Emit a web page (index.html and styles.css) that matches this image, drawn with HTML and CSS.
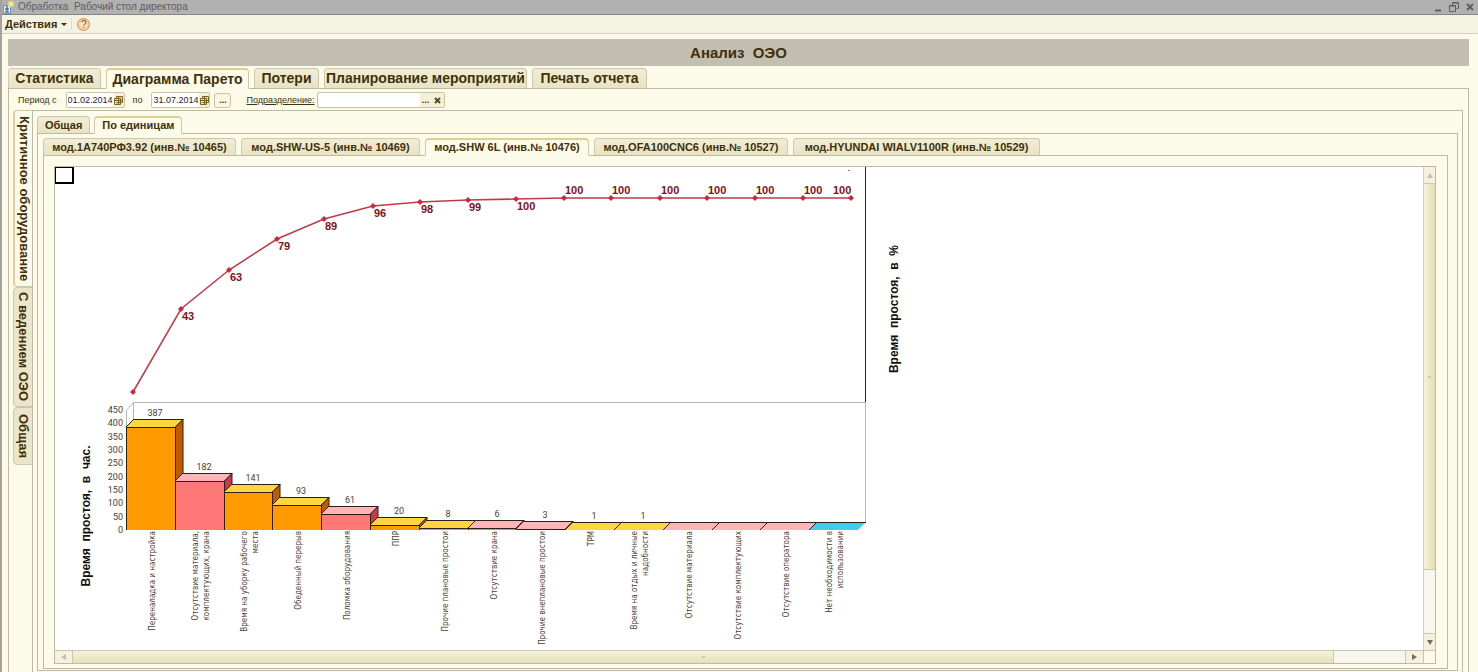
FILE: index.html
```html
<!DOCTYPE html>
<html lang="ru">
<head>
<meta charset="utf-8">
<title>Рабочий стол директора</title>
<link rel="stylesheet" href="styles.css">
</head>
<body>
<div class="app">
  <header class="titlebar">
    <svg class="app-icon" width="12" height="13" viewBox="0 0 12 13" aria-hidden="true">
      <rect x="1" y="4" width="8" height="9" fill="#6f93bd"/>
      <rect x="2" y="5" width="6" height="7" fill="#dfeaf5"/>
      <path d="M5 5v6M3 8h4M3 11h4" stroke="#24496f" stroke-width="1" fill="none"/>
      <circle cx="9" cy="3" r="3" fill="#f1dc7c"/>
      <circle cx="9" cy="3" r="1" fill="#fff4a8"/>
    </svg>
    <span class="titlebar-text">Обработка&nbsp; Рабочий стол директора</span>
    <div class="window-buttons">
      <button class="window-button" aria-label="Свернуть"><svg width="10" height="10" viewBox="0 0 10 10"><path d="M2 8.500h6" stroke="#5e5e60" stroke-width="2"/></svg></button>
      <button class="window-button" aria-label="Восстановить"><svg width="10" height="10" viewBox="0 0 10 10"><path d="M3.500 3V.5h6v6H7.500M.5 3.500h6v6h-6zM0 4h7M3 1h7" stroke="#5e5e60" fill="none"/></svg></button>
      <button class="window-button" aria-label="Закрыть"><svg width="10" height="10" viewBox="0 0 10 10"><path d="M2 2l6 6M8 2L2 8" stroke="#5e5e60" stroke-width="2"/></svg></button>
    </div>
  </header>

  <div class="toolbar">
    <button class="menu-button">Действия <span class="caret"></span></button>
    <button class="help-button" aria-label="Справка">?</button>
  </div>

  <main class="form">
    <h1 class="form-title">Анализ&nbsp; ОЭО</h1>

    <nav class="tabs tabs-large">
      <button class="tab">Статистика</button>
      <button class="tab tab-active">Диаграмма Парето</button>
      <button class="tab">Потери</button>
      <button class="tab">Планирование мероприятий</button>
      <button class="tab">Печать отчета</button>
    </nav>

    <section class="pane pane-main">
      <div class="filters">
        <label for="from">Период с</label>
        <span class="field field-date"><input id="from" value="01.02.2014"><button class="field-button" aria-label="Выбрать дату начала"><svg width="9" height="9" viewBox="0 0 9 9"><path d="M2.500.5h6v6h-2v2h-6v-6h2zM2.500 2.500h4v4M.5 4.500h8M4.500.5v8M2.500 6.500h4" fill="#e9d89a" stroke="#7c661f"/></svg></button></span>
        <label for="to">по</label>
        <span class="field field-date"><input id="to" value="31.07.2014"><button class="field-button" aria-label="Выбрать дату окончания"><svg width="9" height="9" viewBox="0 0 9 9"><path d="M2.500.5h6v6h-2v2h-6v-6h2zM2.500 2.500h4v4M.5 4.500h8M4.500.5v8M2.500 6.500h4" fill="#e9d89a" stroke="#7c661f"/></svg></button></span>
        <button class="period-button" aria-label="Выбрать период">...</button>
        <label class="link-label" for="unit">Подразделение:</label>
        <span class="field field-unit"><input id="unit"><button class="field-button" aria-label="Выбрать">...</button><button class="field-button field-clear" aria-label="Очистить"><svg width="7" height="7" viewBox="0 0 7 7"><path d="M1 1l5 5M6 1L1 6" stroke="#5b4b1c" stroke-width="2"/></svg></button></span>
      </div>

      <div class="side-layout">
        <nav class="side-tabs">
          <button class="side-tab side-tab-active">Критичное оборудование</button>
          <button class="side-tab">С ведением ОЭО</button>
          <button class="side-tab">Общая</button>
        </nav>
        <section class="side-pane">
          <nav class="tabs">
            <button class="tab">Общая</button>
            <button class="tab tab-active">По единицам</button>
          </nav>
          <section class="pane pane-units">
            <nav class="tabs tabs-units">
              <button class="tab">мод.1А740РФ3.92 (инв.№ 10465)</button>
              <button class="tab">мод.SHW-US-5 (инв.№ 10469)</button>
              <button class="tab tab-active">мод.SHW 6L (инв.№ 10476)</button>
              <button class="tab">мод.OFA100CNC6 (инв.№ 10527)</button>
              <button class="tab">мод.HYUNDAI WIALV1100R (инв.№ 10529)</button>
            </nav>
            <section class="pane pane-sheet">
              <div class="viewport">
                <div class="sheet">
                  <svg class="chart" id="chart" width="860" height="483" viewBox="55 167 860 483" role="img" aria-label="Диаграмма Парето"></svg>
                </div>
                <div class="scroll scroll-v">
                  <button class="scroll-button" aria-label="Вверх"><span class="arrow arrow-up"></span></button>
                  <div class="thumb thumb-v"></div>
                  <div class="track-rest-v"></div>
                  <button class="scroll-button" aria-label="Вниз"><span class="arrow arrow-down"></span></button>
                </div>
                <div class="scroll scroll-h">
                  <button class="scroll-button" aria-label="Влево"><span class="arrow arrow-left"></span></button>
                  <div class="thumb thumb-h"></div>
                  <div class="track-rest-h"></div>
                  <button class="scroll-button" aria-label="Вправо"><span class="arrow arrow-right"></span></button>
                </div>
                <div class="scroll-corner"></div>
              </div>
            </section>
          </section>
        </section>
      </div>
    </section>
  </main>
</div>
<script src="chart.js"></script>
</body>
</html>
```
FILE: styles.css
```css
* {
  box-sizing: border-box;
}

body {
  margin: 0;
  background: #fcfae8;
  color: #3f3108;
  font: 9px/12px "Liberation Sans", Arial, sans-serif;
}

button,
input {
  margin: 0;
  padding: 0;
  border: 0;
  background: none;
  color: inherit;
  font: inherit;
}

.app {
  display: flex;
  flex-direction: column;
  height: 100vh;
  overflow: hidden;
  border-left: 2px solid #a3a29c;
}

.titlebar {
  display: flex;
  flex: none;
  align-items: center;
  gap: 4px;
  height: 15px;
  margin-left: -2px;
  padding-left: 2px;
  border-bottom: 1px solid #88877f;
  background: #b1b1b1;
  color: #5c5c5e;
  font-size: 10px;
}

.window-buttons {
  display: flex;
  gap: 6px;
  margin-left: auto;
  padding-right: 3px;
}

.window-button {
  display: flex;
}

.toolbar {
  display: flex;
  flex: none;
  align-items: center;
  height: 19px;
  padding-left: 3px;
  border-bottom: 1px solid #d3d0bd;
  background: #f4f2e0;
}

.menu-button {
  display: flex;
  align-items: center;
  gap: 4px;
  padding-right: 4px;
  border-right: 1px solid #e0dcc4;
  font-size: 11px;
  font-weight: bold;
}

.caret {
  border: 3px solid transparent;
  border-top-color: #3f3108;
  border-bottom: 0;
}

.help-button {
  width: 13px;
  height: 13px;
  margin-left: 5px;
  border: 1px solid #c98f5c;
  border-radius: 50%;
  background: radial-gradient(#fdf0d4, #f3bd84);
  color: #8e4a17;
  font-size: 10px;
  line-height: 11px;
}

.form {
  display: flex;
  flex: 1;
  flex-direction: column;
  min-height: 0;
  padding: 5px 9px 0 6px;
}

.form-title {
  flex: none;
  margin: 0 0 2px;
  background: #c3beb2;
  font-size: 15px;
  line-height: 27px;
  text-align: center;
}

.tabs {
  display: flex;
  flex: none;
  gap: 4px;
}

.tab {
  height: 18px;
  margin-bottom: -1px;
  padding: 0 7px;
  border: 1px solid #cdc8ab;
  border-bottom-color: #bdb9a3;
  border-radius: 4px 4px 0 0;
  background: linear-gradient(#f1edd5, #e9e3c5);
  font-size: 11px;
  font-weight: bold;
  line-height: 15px;
  white-space: nowrap;
}

.tabs-large,
.tabs-units {
  display: grid;
  gap: 5px;
}

.tabs-large {
  grid-template-columns: 93px 143px 65px 203px 115px;
}

.tabs-units {
  grid-template-columns: 193px 179px 164px 194px 247px;
}

.tabs-large .tab {
  height: 21px;
  padding: 0;
  font-size: 14px;
  line-height: 19px;
}

.tab-active {
  position: relative;
  border-top: 2px solid #dfcf95;
  border-bottom-color: #fcfae8;
  background: #fcfae8;
}

.tabs-large .tab-active {
  line-height: 18px;
}

.pane {
  display: flex;
  flex: 1;
  flex-direction: column;
  min-height: 0;
  border: 1px solid #bdb9a3;
}

.pane-main {
  padding: 3px 5px 0 4px;
  border-bottom: 0;
}

.filters {
  display: flex;
  flex: none;
  align-items: center;
  height: 16px;
  margin-bottom: 2px;
  padding-left: 5px;
}

.field {
  display: flex;
  height: 16px;
  margin: 0 8px 0 9px;
  border: 1px solid #c9c3a2;
  border-radius: 2px;
  background: #fff;
}

.field input {
  min-width: 0;
  flex: 1;
  padding-left: 1px;
  color: #1f1d33;
}

.field-date {
  width: 59px;
}

.field-button {
  display: flex;
  align-items: center;
  justify-content: center;
  width: 12px;
  background: #f4f0d8;
  font-weight: bold;
}

.field-date .field-button {
  width: 10px;
}

.period-button {
  width: 17px;
  height: 15px;
  margin: 0 15px 0 -4px;
  border: 1px solid #c9c3a2;
  border-radius: 3px;
  background: #f8f5e2;
  font-weight: bold;
}

.link-label {
  text-decoration: underline;
}

.field-unit {
  width: 128px;
  margin-left: 2px;
}

.side-layout {
  display: flex;
  flex: 1;
  min-height: 0;
}

.side-tabs {
  display: grid;
  flex: none;
  grid-template-rows: 177px 120px 58px;
  width: 20px;
}

.side-tab {
  border: 1px solid #cdc8ab;
  border-radius: 4px 0 0 4px;
  background: #ebe6cb;
  font-size: 13px;
  font-weight: bold;
  line-height: 16px;
  white-space: nowrap;
  writing-mode: vertical-rl;
}

.side-tab-active {
  border-left: 2px solid #dfcf95;
  border-right-color: transparent;
  background: #fcfae8;
}

.side-pane {
  display: flex;
  flex: 1;
  flex-direction: column;
  min-width: 0;
  margin-left: -1px;
  padding: 5px 4px 1px;
  border: 1px solid #bdb9a3;
  border-width: 1px 1px 0;
}

.pane-units {
  padding: 4px 9px 1px 5px;
}

.pane-sheet {
  padding: 10px 11px 4px 10px;
}

.viewport {
  display: grid;
  flex: 1;
  grid-template-columns: minmax(0, 1fr) 12px;
  grid-template-rows: minmax(0, 1fr) 13px;
  min-height: 0;
  border: 1px solid #bdb9a3;
}

.sheet {
  overflow: hidden;
  background: #fff;
}

.chart {
  display: block;
}

.scroll {
  display: flex;
  background: #f8f7ef;
}

.scroll-v {
  flex-direction: column;
  border-left: 1px solid #d3d0bd;
}

.scroll-h {
  border-top: 1px solid #c9c6b0;
}

.scroll-button {
  display: flex;
  flex: none;
  align-items: center;
  justify-content: center;
  background: #f4f1df;
}

.scroll-v .scroll-button {
  height: 16px;
}

.scroll-h .scroll-button {
  width: 17px;
}

.thumb {
  display: flex;
  align-items: center;
  justify-content: center;
}

.thumb::after {
  width: 3px;
  height: 2px;
  background: #cfcaae;
  content: "";
}

.thumb-v {
  flex: 388;
  border: 1px solid #cdc8ab;
  border-width: 1px 0;
  background: linear-gradient(90deg, #f7f3dc, #e4ddb4);
}

.track-rest-v {
  flex: 63;
  border-bottom: 1px solid #cdc8ab;
}

.thumb-h {
  flex: 1263;
  border: 1px solid #cdc8ab;
  border-width: 0 1px;
  background: linear-gradient(#f5f2dc, #e4e0b8);
}

.track-rest-h {
  flex: 71;
  border-right: 1px solid #cdc8ab;
}

.scroll-corner {
  border: 1px solid #c9c6b0;
  border-width: 1px 0 0 1px;
}

.arrow {
  border: 3px solid transparent;
}

.arrow-up {
  border-top: 0;
  border-bottom: 5px solid #c3bfae;
}

.arrow-down {
  border-top: 5px solid #706b5c;
  border-bottom: 0;
}

.arrow-left {
  border-right: 5px solid #c3bfae;
  border-left: 0;
}

.arrow-right {
  border-right: 0;
  border-left: 5px solid #706b5c;
}

.chart-value,
.chart-scale,
.chart-category {
  fill: #4a4034;
  font-family: Roboto, "Liberation Sans", sans-serif;
  font-size: 9px;
}

.chart-value {
  text-anchor: middle;
}

.chart-scale,
.chart-category {
  text-anchor: end;
}

.chart-category {
  font-family: "DejaVu Sans Condensed", "DejaVu Sans", sans-serif;
  font-size: 8px;
}

.chart-percent {
  fill: #7d1220;
  font-size: 11px;
  font-weight: bold;
}

.chart-axis {
  fill: #111;
  font-size: 12px;
  font-weight: bold;
  text-anchor: middle;
  white-space: pre;
}

.chart-line {
  fill: none;
  stroke: #c03a48;
  stroke-width: 1.5;
}

.chart-point {
  fill: #c82a3a;
}

.chart-frame {
  fill: none;
  stroke: #b5b5b5;
}

.chart-edge {
  fill: none;
  stroke: #2a2018;
}
```
FILE: chart.js
```js
const NS = "http://www.w3.org/2000/svg";
const chart = document.getElementById("chart");

function add(tag, attrs, text) {
  const el = document.createElementNS(NS, tag);
  for (const key in attrs) el.setAttribute(key, attrs[key]);
  if (text !== undefined) el.textContent = text;
  chart.appendChild(el);
}

const palette = {
  plan: { front: "#ff9b00", top: "#ffd640", side: "#bd5c00" },
  fault: { front: "#ff7878", top: "#ffb4b8", side: "#c23c50" },
  idle: { front: "#42cdf0", top: "#42cdf0", side: "#42cdf0" }
};

const bars = [
  { value: 387, kind: "plan", lines: ["Переналадка и настройка"] },
  { value: 182, kind: "fault", lines: ["Отсутствие материала,", "комплектующих, крана"] },
  { value: 141, kind: "plan", lines: ["Время на уборку рабочего", "места"] },
  { value: 93, kind: "plan", lines: ["Обеденный перерыв"] },
  { value: 61, kind: "fault", lines: ["Поломка оборудования"] },
  { value: 20, kind: "plan", lines: ["ППР"] },
  { value: 8, kind: "plan", lines: ["Прочие плановые простои"] },
  { value: 6, kind: "fault", lines: ["Отсутствие крана"] },
  { value: 3, kind: "fault", lines: ["Прочие внеплановые простои"] },
  { value: 1, kind: "plan", lines: ["ТРМ"] },
  { value: 1, kind: "plan", lines: ["Время на отдых и личные", "надобности"] },
  { value: 0, kind: "fault", lines: ["Отсутствие материала"] },
  { value: 0, kind: "fault", lines: ["Отсутствие комплектующих"] },
  { value: 0, kind: "fault", lines: ["Отсутствие оператора"] },
  { value: 0, kind: "idle", lines: ["Нет необходимости в", "использовании"] }
];

const left = 126, base = 530, step = 48.8, scale = 120 / 450;

add("rect", { x: 55.5, y: 167.5, width: 17, height: 15, fill: "#fff", stroke: "#000" });
add("path", { d: "M73 167v16.500M55 183h19", stroke: "#000", "stroke-width": 2 });
add("path", { d: "M865.500 167v235", class: "chart-edge" });
add("path", { d: "M848 170.500h2", stroke: "#888" });
add("path", { d: "M126.500 530V410.500l7-8H865.500V522", class: "chart-frame" });
add("path", { d: "M133.500 402v20", class: "chart-frame" });

for (let v = 0; v <= 450; v += 50) {
  add("text", { x: 123, y: Math.round(base - v * scale) + 3, class: "chart-scale" }, v);
}

bars.forEach((bar, i) => {
  const color = palette[bar.kind];
  const x = Math.round(left + i * step);
  const r = Math.round(left + (i + 1) * step);
  const y = Math.round(base - bar.value * scale);
  if (bar.value > 1) {
    add("path", { d: `M${r} ${base}V${y}l8-8V${base - 8}z`, fill: color.side, stroke: "#3a1c10" });
    add("rect", { x, y, width: r - x, height: base - y, fill: color.front });
  }
  add("path", { d: `M${x} ${y}l8-8H${r + 8}l-8 8z`, fill: color.top });
  add("path", { d: `M${x} ${y}l8-8`, stroke: "#3a1c10" });
  add("path", { d: `M${x + 8} ${y - 7.5}H${r + 8}`, class: "chart-edge" });
  if (bar.value > 1) {
    add("path", { d: `M${x} ${y + .5}H${r}l8-8M${x + .5} ${y}V${base}M${r + .5} ${y}V${base}`, class: "chart-edge" });
  }
  if (bar.value > 0) {
    add("text", { x: x + 29, y: y - 11, class: "chart-value" }, bar.value);
  }
  bar.lines.forEach((line, n) => {
    const tx = x + (bar.lines.length > 1 ? 23 : 29) + n * 11;
    add("text", { transform: `translate(${tx} 531) rotate(-90)`, class: "chart-category" }, line);
  });
});

const percents = [
  [133, 392], [181, 309, 43], [229, 270, 63], [277, 239, 79], [324, 219, 89],
  [373, 206, 96], [420, 202, 98], [468, 200, 99], [516, 199, 100], [564, 198, 100],
  [611, 198, 100], [660, 198, 100], [707, 198, 100], [755, 198, 100], [803, 198, 100], [851, 198, 100]
];

add("polyline", { points: percents.map(p => p[0] + "," + p[1]).join(" "), class: "chart-line" });
percents.forEach(([x, y, label], i) => {
  add("path", { d: `M${x - 3} ${y}l3-3 3 3-3 3z`, class: "chart-point" });
  if (label === undefined) return;
  const lx = i === 15 ? x - 18 : x + 1;
  add("text", { x: lx, y: i > 8 ? y - 4 : y + 11, class: "chart-percent" }, label);
});

add("text", { transform: "translate(90 516) rotate(-90)", class: "chart-axis" }, "Время  простоя,  в  час.");
add("text", { transform: "translate(898 309) rotate(-90)", class: "chart-axis" }, "Время  простоя,  в  %");
```
